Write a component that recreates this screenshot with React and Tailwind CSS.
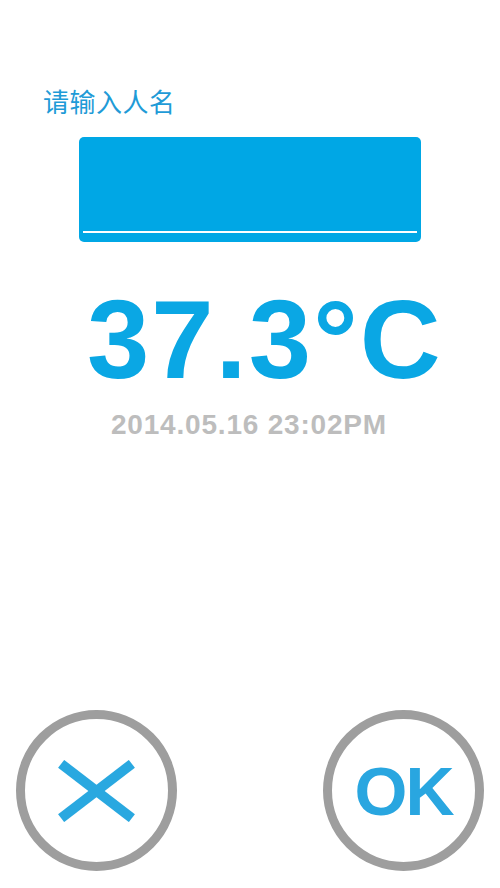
import { useState } from 'react'

const App = () => {
  const [name] = useState('')

  return (
    <div className="w-[500px] h-[888px] bg-white flex flex-col font-['Liberation_Sans',sans-serif] overflow-hidden">
      {/* Label */}
      <p className="pl-[43px] pt-[88px] text-[26px] leading-none tracking-[0.5px] text-[#1f9bd7] font-['Noto_Sans_CJK_SC',sans-serif]">
        请输入人名
      </p>

      {/* Name input */}
      <div className="ml-[79px] mt-[23px] w-[342px] h-[105px] rounded-[5px] bg-[#00a7e5] flex flex-col justify-end px-[4px] pb-[9px]">
        <span className="sr-only">{name}</span>
        <div className="h-[2px] bg-white" />
      </div>

      {/* Temperature */}
      <p className="pl-[87px] mt-[42px] text-[112px] font-bold leading-none tracking-[2px] text-[#0aa7e4]">
        37.3°C
      </p>

      {/* Date */}
      <p className="pl-[111px] mt-[15px] text-[28px] font-bold leading-none tracking-[0.8px] text-[#bdbdbd]">
        2014.05.16 23:02PM
      </p>

      {/* Buttons */}
      <div className="mt-auto mb-[17px] px-[16px] flex items-center justify-between">
        <button className="w-[161px] h-[161px] rounded-full border-[9px] border-[#9e9e9e] flex items-center justify-center">
          <svg width="77" height="62" viewBox="0 0 77 62">
            <line x1="3.13" y1="3.9" x2="73.87" y2="58.1" stroke="#29a8e0" strokeWidth="10" />
            <line x1="73.87" y1="3.9" x2="3.13" y2="58.1" stroke="#29a8e0" strokeWidth="10" />
          </svg>
        </button>
        <button className="w-[161px] h-[161px] rounded-full border-[9px] border-[#9e9e9e] flex items-center justify-center text-[68px] font-bold leading-none text-[#29a6e0] tracking-[-2px]">
          OK
        </button>
      </div>
    </div>
  )
}

export default App
